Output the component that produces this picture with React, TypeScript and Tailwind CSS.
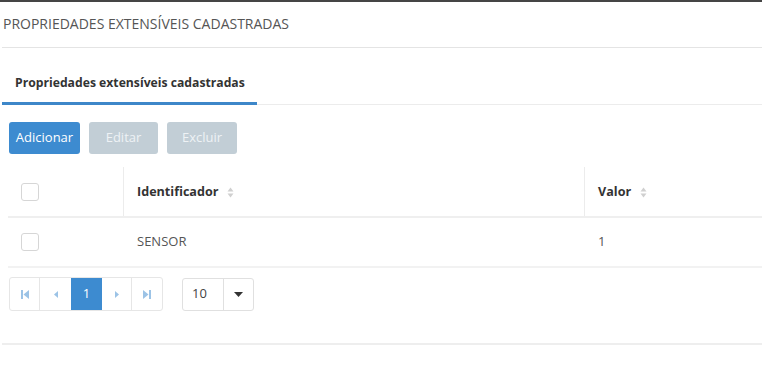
import React from "react";

function SortIcon() {
  return (
    <svg width="7" height="11" viewBox="0 0 7 11" className="ml-[9px]">
      <path d="M3.5 0.5 L6.5 4.5 L0.5 4.5 Z" fill="#d0d0d0" />
      <path d="M3.5 10.5 L6.5 6.5 L0.5 6.5 Z" fill="#d0d0d0" />
    </svg>
  );
}

function Checkbox() {
  return <div className="w-[18px] h-[18px] rounded-[3px] border border-[#d6d6d6] bg-white" />;
}

export default function App() {
  return (
    <div
      className="w-[763px] h-[370px] bg-white text-[#444] overflow-hidden"
      style={{ fontFamily: '"Open Sans", "Noto Sans", sans-serif' }}
    >
      <div className="h-[2px] w-[762px] bg-[#454545]" />
      <div className="ml-[2px] w-[760px] h-[46px] border-b border-[#e4e4e4] flex items-center pl-[1px] pb-[2px]">
        <span className="text-[14px] text-[#555]">PROPRIEDADES EXTENSÍVEIS CADASTRADAS</span>
      </div>
      <div className="ml-[2px] w-[760px] mt-[9px] border-b border-[#ececec] flex">
        <div className="w-[255px] h-[48px] border-b-[3px] border-[#3d87c9] mb-[-1px] flex items-center pl-[13px] pt-[8px]">
          <span className="text-[12.2px] font-bold text-[#333]">Propriedades extensíveis cadastradas</span>
        </div>
      </div>
      <div className="pl-[9px] pt-[17px] flex gap-[9px]">
        <button className="w-[71px] h-[32px] rounded-[3px] bg-[#3d8bd0] text-white text-[13px]">Adicionar</button>
        <button className="w-[69px] h-[32px] rounded-[3px] bg-[#c2ced6] text-[#eef2f5] text-[13px]">Editar</button>
        <button className="w-[70px] h-[32px] rounded-[3px] bg-[#c2ced6] text-[#eef2f5] text-[13px]">Excluir</button>
      </div>
      <div className="ml-[8px] mt-[13px] w-[754px]">
        <div className="flex h-[51px] border-b-2 border-[#efefef]">
          <div className="w-[116px] flex items-center pl-[13px] border-r border-[#ececec]">
            <Checkbox />
          </div>
          <div className="w-[461px] flex items-center pl-[13px] pt-[2px] border-r border-[#ececec]">
            <span className="text-[12.6px] font-bold text-[#333]">Identificador</span>
            <SortIcon />
          </div>
          <div className="flex-1 flex items-center pl-[13px] pt-[2px]">
            <span className="text-[12.6px] font-bold text-[#333]">Valor</span>
            <SortIcon />
          </div>
        </div>
        <div className="flex h-[50px] border-b-2 border-[#f2f2f2]">
          <div className="w-[116px] flex items-center pl-[13px]">
            <Checkbox />
          </div>
          <div className="w-[461px] flex items-center pl-[13px]">
            <span className="text-[13px] text-[#555]">SENSOR</span>
          </div>
          <div className="flex-1 flex items-center pl-[13px]">
            <span className="text-[13px] text-[#555]">1</span>
          </div>
        </div>
      </div>
      <div className="ml-[9px] mt-[9px] flex items-center">
        <div className="flex h-[34px] border border-[#e6e6e6] rounded-[3px] overflow-hidden">
          <div className="w-[30px] flex items-center justify-center border-r border-[#e6e6e6]">
            <svg width="8" height="9" viewBox="0 0 8 9">
              <rect x="0" y="0" width="2" height="9" fill="#9cc3e6" />
              <path d="M8 0 L2.5 4.5 L8 9 Z" fill="#9cc3e6" />
            </svg>
          </div>
          <div className="w-[31px] flex items-center justify-center">
            <svg width="4" height="7" viewBox="0 0 4 7">
              <path d="M4 0 L0 3.5 L4 7 Z" fill="#9cc3e6" />
            </svg>
          </div>
          <div className="w-[31px] flex items-center justify-center bg-[#3d8bd0] text-white text-[13px]">1</div>
          <div className="w-[30px] flex items-center justify-center border-r border-[#e6e6e6]">
            <svg width="4" height="7" viewBox="0 0 4 7">
              <path d="M0 0 L4 3.5 L0 7 Z" fill="#9cc3e6" />
            </svg>
          </div>
          <div className="w-[30px] flex items-center justify-center">
            <svg width="8" height="9" viewBox="0 0 8 9">
              <path d="M0 0 L5.5 4.5 L0 9 Z" fill="#9cc3e6" />
              <rect x="6" y="0" width="2" height="9" fill="#9cc3e6" />
            </svg>
          </div>
        </div>
        <div className="ml-[19px] flex h-[33px] w-[72px] border border-[#e0e0e0] rounded-[3px]">
          <div className="w-[41px] flex items-center pl-[9px] border-r border-[#e0e0e0] text-[13px] text-[#444]">10</div>
          <div className="flex-1 flex items-center justify-center">
            <svg width="9" height="5" viewBox="0 0 9 5">
              <path d="M0 0 L9 0 L4.5 5 Z" fill="#333" />
            </svg>
          </div>
        </div>
      </div>
      <div className="ml-[2px] mt-[32px] w-[760px] h-[2px] bg-[#eeeeee]" />
    </div>
  );
}
